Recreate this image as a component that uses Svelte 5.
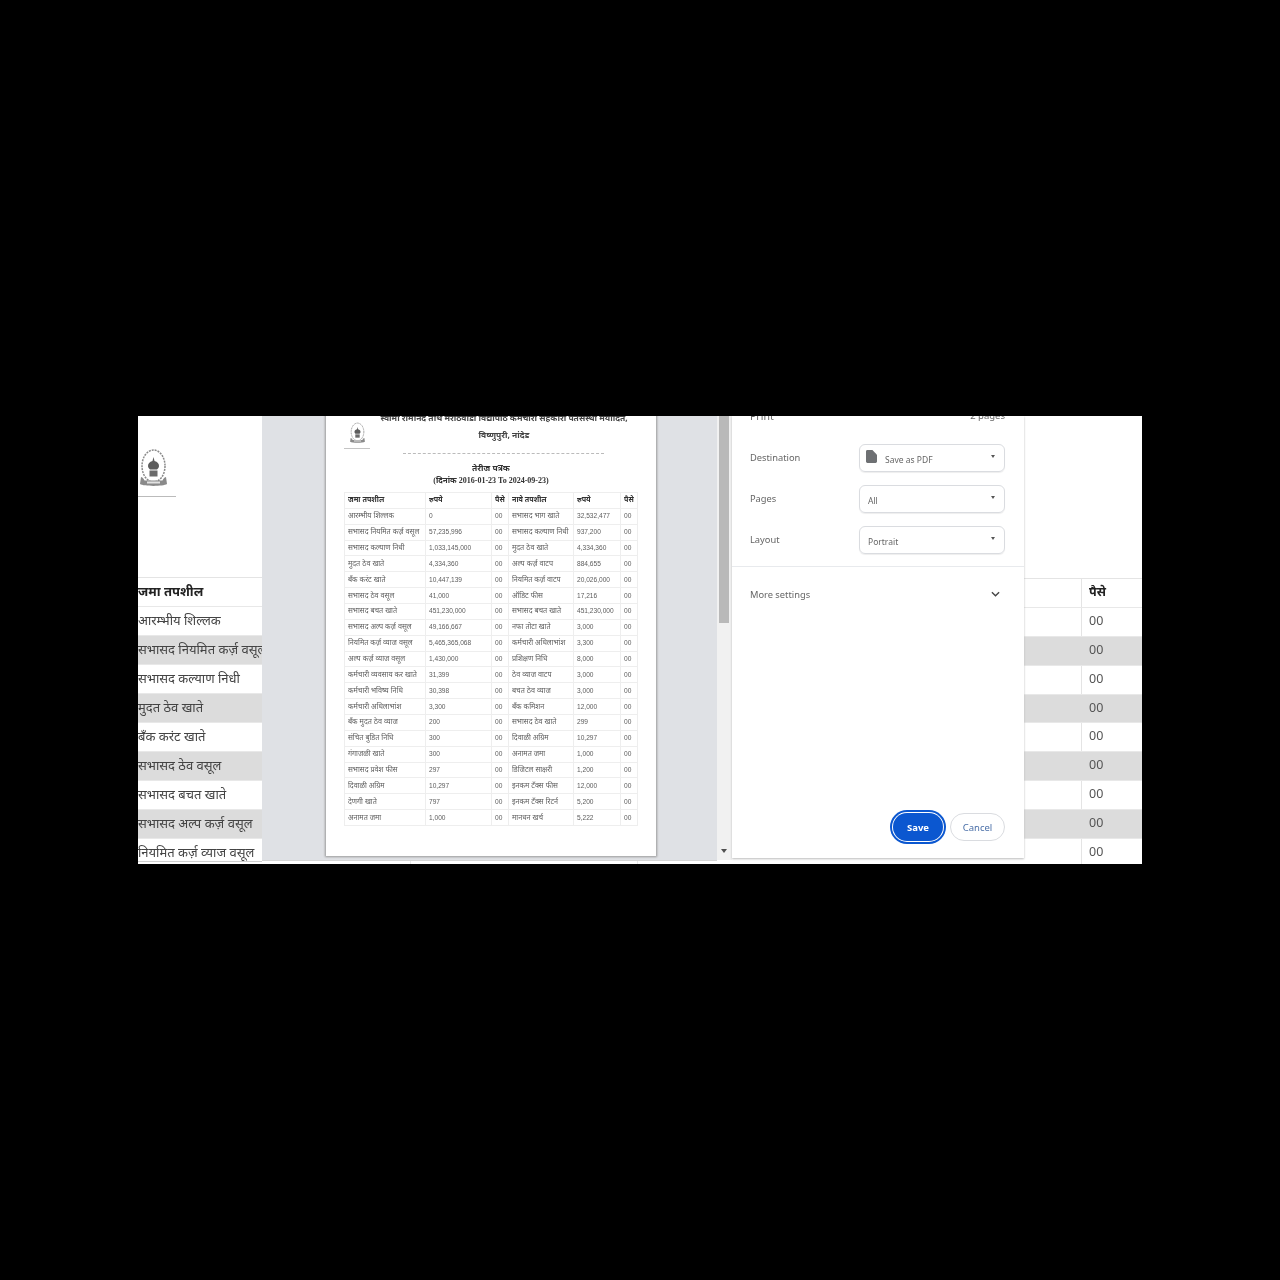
<script lang="ts">
  const pageRows = [
    ['आरम्भीय शिल्लक', '0', 'सभासद भाग खाते', '32,532,477'],
    ['सभासद नियमित कर्ज़ वसूल', '57,235,996', 'सभासद कल्याण निधी', '937,200'],
    ['सभासद कल्याण निधी', '1,033,145,000', 'मुदत ठेव खाते', '4,334,360'],
    ['मुदत ठेव खाते', '4,334,360', 'अल्प कर्ज़ वाटप', '884,655'],
    ['बँक करंट खाते', '10,447,139', 'नियमित कर्ज़ वाटप', '20,026,000'],
    ['सभासद ठेव वसूल', '41,000', 'ऑडिट फीस', '17,216'],
    ['सभासद बचत खाते', '451,230,000', 'सभासद बचत खाते', '451,230,000'],
    ['सभासद अल्प कर्ज़ वसूल', '49,166,667', 'नफा तोटा खाते', '3,000'],
    ['नियमित कर्ज़ व्याज वसूल', '5,465,365,068', 'कर्मचारी अधिलाभांश', '3,300'],
    ['अल्प कर्ज़ व्याज वसूल', '1,430,000', 'प्रशिक्षण निधि', '8,000'],
    ['कर्मचारी व्यवसाय कर खाते', '31,399', 'ठेव व्याज वाटप', '3,000'],
    ['कर्मचारी भविष्य निधि', '30,398', 'बचत ठेव व्याज', '3,000'],
    ['कर्मचारी अधिलाभांश', '3,300', 'बँक कमिशन', '12,000'],
    ['बँक मुदत ठेव व्याज', '200', 'सभासद ठेव खाते', '299'],
    ['संचित बुडित निधि', '300', 'दिवाळी अग्रिम', '10,297'],
    ['गंगाजळी खाते', '300', 'अनामत जमा', '1,000'],
    ['सभासद प्रवेश फीस', '297', 'डिजिटल साक्षरी', '1,200'],
    ['दिवाळी अग्रिम', '10,297', 'इनकम टॅक्स फीस', '12,000'],
    ['देणगी खाते', '797', 'इनकम टॅक्स रिटर्न', '5,200'],
    ['अनामत जमा', '1,000', 'मानधन खर्च', '5,222']
  ];

  const bigRows = [
    'आरम्भीय शिल्लक',
    'सभासद नियमित कर्ज़ वसूल',
    'सभासद कल्याण निधी',
    'मुदत ठेव खाते',
    'बँक करंट खाते',
    'सभासद ठेव वसूल',
    'सभासद बचत खाते',
    'सभासद अल्प कर्ज़ वसूल',
    'नियमित कर्ज़ व्याज वसूल'
  ];

  const options = [
    { label: 'Destination', value: 'Save as PDF', file: true },
    { label: 'Pages', value: 'All', file: false },
    { label: 'Layout', value: 'Portrait', file: false }
  ];
</script>

{#snippet crest()}
  <svg viewBox="0 0 27 40" class="crest-svg">
    <ellipse cx="13.500" cy="18" rx="11.500" ry="16" fill="none" stroke="#8a8a8a" stroke-width="1.500" stroke-dasharray="2 1"/>
    <path d="M13.500 9l1 4c3 1 4.500 2.500 4.500 5 0 1.500-1 2.500-2 3.500h-7c-1-1-2-2-2-3.500 0-2.500 1.500-4 4.500-5z" fill="#5c5c5c"/>
    <rect x="9.500" y="22.500" width="8" height="6" fill="#6a6a6a"/>
    <path d="M1 29c2 .5 3 2 3.500 3.500h18C23 31 24 29.500 26 29l1 7c-4 2.500-23 2.500-27 0z" fill="#8a8a8a"/>
    <rect x="7" y="33.500" width="13" height="2" fill="#e2e2e2"/>
  </svg>
{/snippet}

<div class="stage">
  <div class="sheet-left">
    <div class="left-top">
      <div class="left-crest">{@render crest()}</div>
      <div class="left-rule"></div>
    </div>
    <div class="big-row big-head"><b>जमा तपशील</b></div>
    {#each bigRows as text, i}
      <div class="big-row" class:shade={i % 2 === 1}>{text}</div>
    {/each}
  </div>

  <div class="preview-col">
    <div class="preview">
      <div class="page">
        <div class="org">
          <div class="org-logo">
            {@render crest()}
            <div class="org-rule"></div>
          </div>
          <div class="org-name">
            <div class="org-title">स्वामी रामानंद तीर्थ मराठवाडा विद्यापीठ कर्मचारी सहकारी पतसंस्था मर्यादित,</div>
            <div class="org-place">विष्णुपुरी, नांदेड</div>
          </div>
        </div>
        <div class="dash"></div>
        <div class="sheet-title">तेरीज पत्रक</div>
        <div class="sheet-date">(दिनांक 2016-01-23 To 2024-09-23)</div>
        <table class="trial">
          <thead>
            <tr>
              <th>जमा तपशील</th>
              <th>रुपये</th>
              <th>पैसे</th>
              <th>नावे तपशील</th>
              <th>रुपये</th>
              <th>पैसे</th>
            </tr>
          </thead>
          <tbody>
            {#each pageRows as row}
              <tr>
                <td>{row[0]}</td>
                <td>{row[1]}</td>
                <td>00</td>
                <td>{row[2]}</td>
                <td>{row[3]}</td>
                <td>00</td>
              </tr>
            {/each}
          </tbody>
        </table>
      </div>
    </div>
    <div class="under"></div>
  </div>

  <div class="scroll">
    <div class="thumb"></div>
    <div class="scroll-arrow"></div>
  </div>

  <div class="panel">
    <div class="panel-head">
      <span>Print</span>
      <span class="page-count">2 pages</span>
    </div>
    {#each options as opt}
      <div class="option">
        <div class="opt-label">{opt.label}</div>
        <div class="select">
          {#if opt.file}
            <svg viewBox="0 0 12 14" class="file-icon">
              <path d="M0 1.500C0 .7.7 0 1.500 0H7l5 5v7.500c0 .8-.7 1.500-1.500 1.500h-9C.7 14 0 13.300 0 12.500z" fill="#6e7073"/>
            </svg>
          {/if}
          <span class="select-text" class:with-icon={opt.file}>{opt.value}</span>
          <span class="caret"></span>
        </div>
      </div>
    {/each}
    <div class="panel-rule"></div>
    <div class="more">
      <span>More settings</span>
      <svg viewBox="0 0 10 7" class="chevron">
        <path d="M1 1l4 4 4-4" fill="none" stroke="#444" stroke-width="1.500"/>
      </svg>
    </div>
    <div class="actions">
      <button class="save">Save</button>
      <button class="cancel">Cancel</button>
    </div>
  </div>

  <div class="sheet-right">
    <div class="right-top"></div>
    <div class="money-row money-head">
      <div class="money-blank"></div>
      <div class="money-cell"><b>पैसे</b></div>
    </div>
    {#each bigRows as _, i}
      <div class="money-row" class:shade={i % 2 === 1}>
        <div class="money-blank"></div>
        <div class="money-cell">00</div>
      </div>
    {/each}
  </div>
</div>

<style>
  :global(body) {
    margin: 0;
    background: #000;
  }

  .stage {
    display: grid;
    grid-template-columns: 124px 455px 15px 292px 118px;
    width: 1004px;
    height: 448px;
    margin-left: 138px;
    margin-top: 416px;
    margin-bottom: 416px;
    overflow: hidden;
    background: #fff;
    font-family: "Noto Sans", "Open Sans", sans-serif;
    filter: blur(0.3px);
  }

  .sheet-left {
    overflow: hidden;
    white-space: nowrap;
    background: #fff;
    color: #444;
    font-size: 13px;
  }

  .left-top {
    height: 162px;
    box-sizing: border-box;
    padding-top: 32px;
    border-bottom: 1px solid #e4e4e4;
  }

  .left-crest {
    width: 27px;
    height: 40px;
    margin-left: 2px;
  }

  .left-rule {
    width: 38px;
    height: 1px;
    margin-top: 8px;
    background: #bbb;
  }

  .crest-svg {
    display: block;
    width: 100%;
    height: 100%;
  }

  .big-row {
    height: 29px;
    line-height: 27px;
    box-sizing: border-box;
    border-bottom: 1px solid #e8e8e8;
  }

  .big-row:last-child {
    height: 23px;
    border-bottom-color: #cfcfcf;
  }

  .big-head {
    color: #222;
  }

  .shade {
    background: #dcdcdc;
  }

  .preview-col {
    display: flex;
    flex-direction: column;
  }

  .preview {
    height: 444px;
    background: #dfe1e5;
    overflow: hidden;
  }

  .under {
    flex: 1;
    border-top: 1px solid #d4d4d4;
    background: linear-gradient(#e8e8e8, #e8e8e8) 148px 0 / 1px 100% no-repeat,
      linear-gradient(#e8e8e8, #e8e8e8) 375px 0 / 1px 100% no-repeat,
      #fff;
  }

  .page {
    width: 330px;
    height: 460px;
    margin-left: 64px;
    margin-top: -20px;
    box-sizing: border-box;
    padding: 16px 18px 0;
    background: #fff;
    box-shadow: 0 0 2px 1px #9a9a9a;
    color: #5c5c5c;
    filter: blur(0.25px);
  }

  .org {
    display: grid;
    grid-template-columns: 26px 1fr;
    height: 41px;
  }

  .org-logo {
    padding-top: 10px;
  }

  .org-logo .crest-svg {
    width: 17px;
    height: 22px;
    margin-left: 5px;
  }

  .org-rule {
    height: 1px;
    margin-top: 4px;
    background: #c4c4c4;
  }

  .org-name {
    text-align: center;
    white-space: nowrap;
  }

  .org-title {
    font-size: 8.500px;
    font-weight: 700;
    line-height: 12px;
    color: #444;
  }

  .org-place {
    margin-top: 5px;
    font-size: 8.500px;
    font-weight: 700;
    line-height: 12px;
    color: #444;
  }

  .dash {
    width: 201px;
    margin-left: 59px;
    border-top: 1px dashed #bbb;
  }

  .sheet-title {
    margin-top: 8px;
    text-align: center;
    font-size: 8.500px;
    font-weight: 700;
    line-height: 12px;
    color: #333;
  }

  .sheet-date {
    margin-top: 1px;
    text-align: center;
    font-family: "Liberation Serif", "Noto Sans", serif;
    font-size: 8px;
    font-weight: 700;
    line-height: 12px;
    color: #333;
  }

  .trial {
    width: 294px;
    margin-top: 5px;
    border-collapse: collapse;
    table-layout: fixed;
    font-family: "Liberation Sans", "Noto Sans", sans-serif;
    font-size: 6.600px;
  }

  .trial th,
  .trial td {
    height: 15.860px;
    padding: 0 0 0 3px;
    box-sizing: border-box;
    border: 1px solid #eee;
    overflow: hidden;
    white-space: nowrap;
    text-align: left;
    line-height: 12px;
  }

  .trial th {
    color: #333;
    font-size: 7.200px;
  }

  .trial td:nth-child(1),
  .trial td:nth-child(4) {
    font-size: 7.200px;
  }

  .trial th:nth-child(1) {
    width: 81px;
  }

  .trial th:nth-child(2) {
    width: 66px;
  }

  .trial th:nth-child(3) {
    width: 17px;
  }

  .trial th:nth-child(4) {
    width: 65px;
  }

  .trial th:nth-child(5) {
    width: 47px;
  }

  .scroll {
    position: relative;
    height: 444px;
    background: #f1f1f1;
  }

  .thumb {
    width: 10px;
    height: 207px;
    margin-left: 2px;
    background: #b9b9b9;
  }

  .scroll-arrow {
    position: absolute;
    left: 4px;
    bottom: 7px;
    border-left: 3.500px solid transparent;
    border-right: 3.500px solid transparent;
    border-top: 4px solid #505050;
  }

  .panel {
    display: flex;
    flex-direction: column;
    height: 442px;
    background: #fff;
    box-shadow: 0 1px 2px #bbb;
    color: #666;
    font-size: 9.300px;
    z-index: 1;
  }

  .panel-head {
    display: flex;
    justify-content: space-between;
    height: 35px;
    margin-top: -7px;
    padding: 0 19px 0 18px;
    font-size: 10.500px;
    line-height: 14px;
  }

  .page-count {
    font-size: 9.500px;
  }

  .option {
    display: grid;
    grid-template-columns: 109px 146px;
    align-items: center;
    height: 28px;
    margin-bottom: 13px;
    padding-left: 18px;
  }

  .opt-label {
    margin-top: -1px;
  }

  .select {
    display: flex;
    align-items: center;
    height: 100%;
    box-sizing: border-box;
    padding: 0 9px 0 8px;
    border: 1px solid #dadce0;
    border-radius: 6px;
    box-shadow: 0 1px 1px #eee;
    font-size: 8.500px;
  }

  .file-icon {
    width: 11px;
    height: 13px;
    margin-top: -4px;
    margin-left: -2px;
  }

  .select-text {
    flex: 1;
    padding-top: 3px;
  }

  .with-icon {
    padding-left: 8px;
  }

  .caret {
    margin-top: -3px;
    border-left: 2.500px solid transparent;
    border-right: 2.500px solid transparent;
    border-top: 3px solid #555;
  }

  .panel-rule {
    height: 1px;
    margin-top: -1px;
    background: #e8eaed;
  }

  .more {
    display: flex;
    align-items: center;
    justify-content: space-between;
    height: 54px;
    padding: 0 24px 0 18px;
  }

  .chevron {
    width: 9px;
    height: 7px;
  }

  .actions {
    display: flex;
    align-items: center;
    justify-content: flex-end;
    gap: 5px;
    margin-top: auto;
    margin-bottom: 15px;
    padding-right: 19px;
  }

  button {
    font-family: "Noto Sans", "Open Sans", sans-serif;
    font-size: 9.500px;
    padding: 0;
  }

  .save {
    width: 50px;
    height: 28px;
    margin: 2px;
    border: 0;
    border-radius: 14px;
    background: #0b57d0;
    color: #fff;
    font-weight: 700;
    box-shadow: 0 0 0 1px #fff, 0 0 0 3px #0b57d0;
  }

  .cancel {
    width: 55px;
    height: 28px;
    border: 1px solid #dadce0;
    border-radius: 14px;
    background: #fff;
    color: #4a6fa8;
  }

  .sheet-right {
    overflow: hidden;
    color: #555;
    font-size: 12.500px;
    background: #fff;
  }

  .right-top {
    height: 162px;
    border-bottom: 1px solid #e4e4e4;
  }

  .money-row {
    display: grid;
    grid-template-columns: 58px 60px;
    height: 28.880px;
    box-sizing: border-box;
    border-bottom: 1px solid #e8e8e8;
  }

  .money-blank {
    border-right: 1px solid #e4e4e4;
  }

  .money-row.shade .money-blank {
    border-right-color: transparent;
  }

  .money-cell {
    padding-left: 7px;
    line-height: 25px;
  }

  .money-head {
    color: #222;
  }
</style>
